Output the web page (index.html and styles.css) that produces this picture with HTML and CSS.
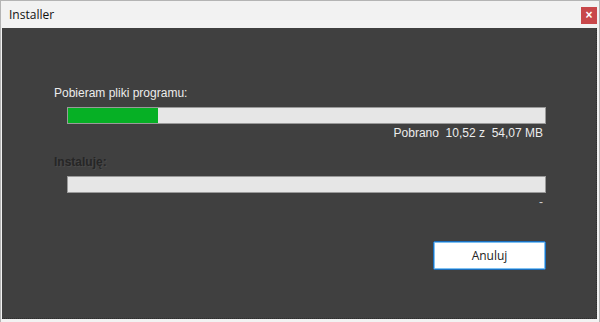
FILE: index.html
```html
<!DOCTYPE html>
<html lang="pl">
<head>
    <meta charset="UTF-8">
    <title>Installer</title>
    <link rel="stylesheet" href="styles.css">
</head>
<body>
    <div class="window">
        <div class="titlebar">
            <span class="title">Installer</span>
            <span class="close">&#215;</span>
        </div>
        <div class="content">
            <div class="label">Pobieram pliki programu:</div>
            <div class="bar"><div class="fill" style="width: 18.8%"></div></div>
            <div class="status">Pobrano&nbsp; 10,52 z&nbsp; 54,07 MB</div>

            <div class="label disabled">Instaluję:</div>
            <div class="bar bar-second"></div>
            <div class="status dash">-</div>

            <div class="actions">
                <button type="button" class="cancel">Anuluj</button>
            </div>
        </div>
    </div>
</body>
</html>
```

FILE: styles.css
```css
body {
    margin: 0;
    padding: 0;
    background-color: #ffffff;
    font-family: "Liberation Sans", Arial, sans-serif;
}

.window {
    width: 600px;
    height: 322px;
    box-sizing: border-box;
    background-color: #f2f2f2;
    border: 1px solid #b4b4b4;
    border-bottom: none;
    padding: 0 2px 3px 1px;
    display: flex;
    flex-direction: column;
}

.titlebar {
    height: 27px;
    display: flex;
    align-items: center;
    justify-content: space-between;
    padding-left: 7px;
}

.title {
    font-family: "Open Sans", "Noto Sans", sans-serif;
    font-size: 12px;
    color: #111;
}

.close {
    width: 16px;
    height: 17px;
    background-color: #c8474a;
    color: #ffffff;
    font-size: 12px;
    font-weight: bold;
    line-height: 16px;
    text-align: center;
    margin-top: 2px;
}

.content {
    flex: 1;
    background-color: #404040;
    border-right: 1px dotted #2e2e2e;
    border-bottom: 1px dotted #2e2e2e;
    padding: 58px 50px 0 52px;
}

.label {
    font-size: 12px;
    line-height: 15px;
    color: #ececec;
}

.label.disabled {
    margin-top: 14px;
    color: #262626;
    font-weight: bold;
    text-shadow: 1px 1px 0 #4a4a4a;
}

.bar {
    margin: 6px 0 0 13px;
    height: 15px;
    border: 1px solid #9a9a9a;
    background-color: #e6e6e6;
}

.bar-second {
    margin-top: 6px;
}

.fill {
    height: 100%;
    background-color: #06b025;
}

.status {
    margin-top: 2px;
    padding-right: 3px;
    text-align: right;
    font-size: 12px;
    line-height: 15px;
    color: #ececec;
}

.status.dash {
    color: #cfcfcf;
}

.actions {
    margin-top: 31px;
    display: flex;
    justify-content: flex-end;
}

.cancel {
    width: 113px;
    height: 29px;
    background-color: #ffffff;
    border: 1px solid #1a6fc0;
    border-radius: 2px;
    box-shadow: inset 0 0 0 1px #7ec1f2;
    font-family: "Open Sans", "Noto Sans", sans-serif;
    font-size: 12px;
    color: #222;
    cursor: pointer;
}
```
